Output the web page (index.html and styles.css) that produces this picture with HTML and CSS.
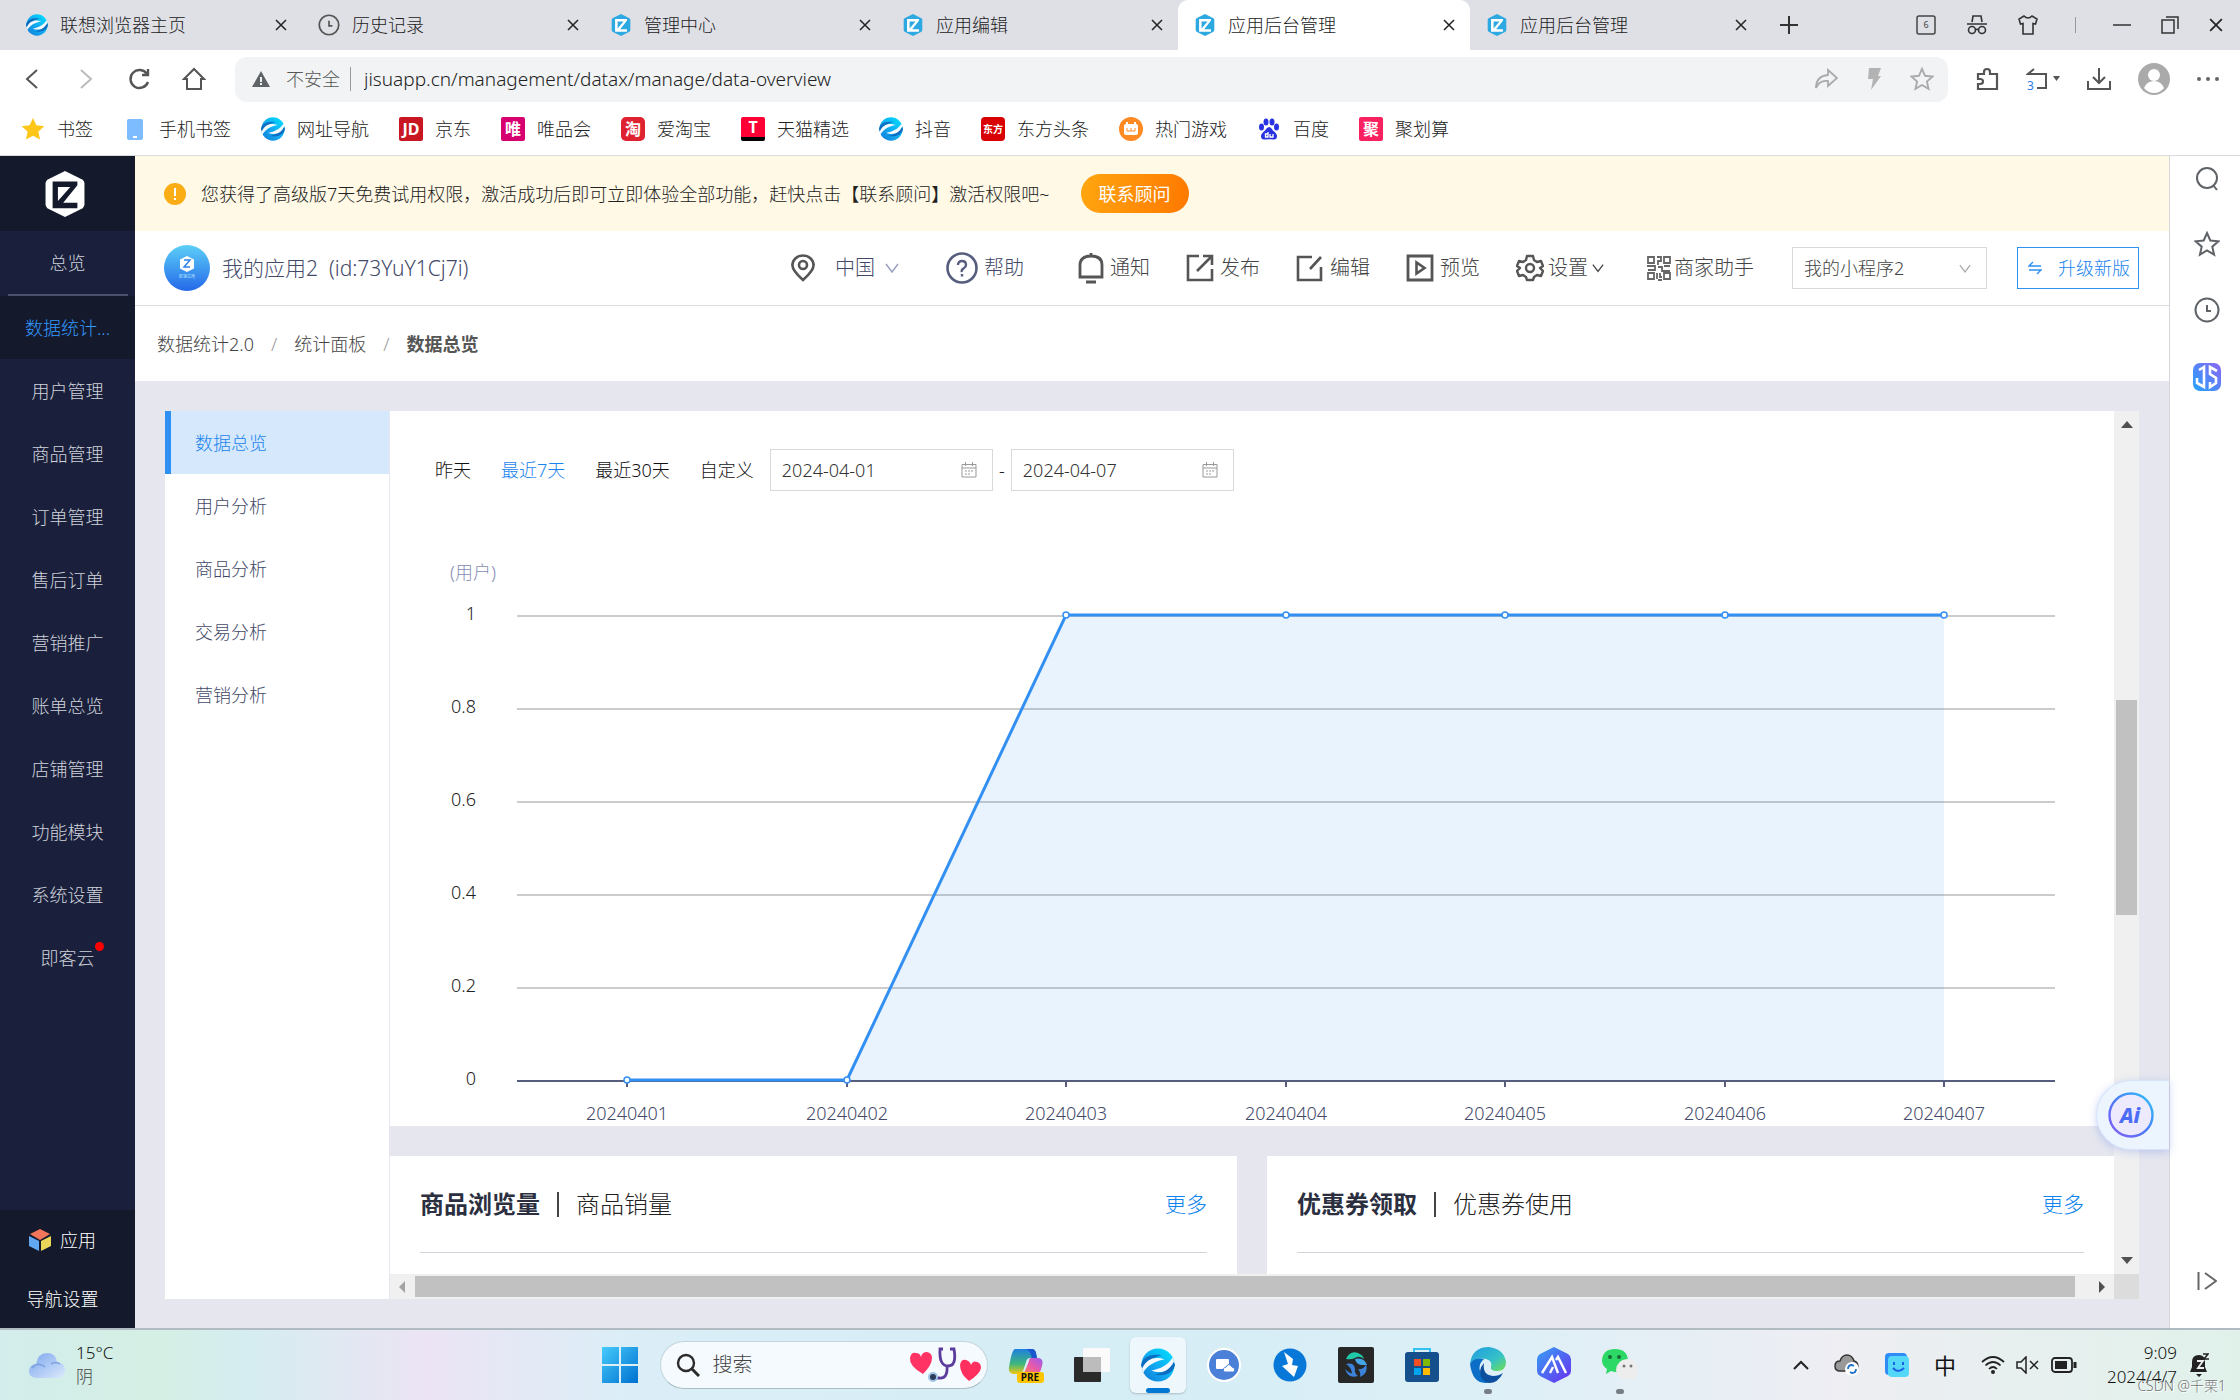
FILE: index.html
```
<!DOCTYPE html>
<html lang="zh-CN">
<head>
    <meta charset="UTF-8">
    <meta name="viewport" content="width=device-width, initial-scale=1.0">
    <title>应用后台管理</title>
    <link rel="stylesheet" href="styles.css">
</head>
<body>
<!-- Shared icons -->
<svg class="sprite" width="0" height="0" aria-hidden="true">
    <defs>
        <linearGradient id="eBase" x1="0" y1="1" x2="1" y2="0"><stop offset="0" stop-color="#1478d4"/><stop offset=".45" stop-color="#10a8f0"/><stop offset="1" stop-color="#00e5ff"/></linearGradient>
        <linearGradient id="avatarBg" x1="0" y1="0" x2="0" y2="1"><stop offset="0" stop-color="#5ccff8"/><stop offset="1" stop-color="#2468e8"/></linearGradient>
        <linearGradient id="winBg" x1="0" y1="0" x2="1" y2="1"><stop offset="0" stop-color="#45cbfb"/><stop offset="1" stop-color="#0070d0"/></linearGradient>
        <linearGradient id="aiRing" x1="0" y1="1" x2="1" y2="0"><stop offset="0" stop-color="#8a5cf6"/><stop offset=".5" stop-color="#4b7bf5"/><stop offset="1" stop-color="#2fc6fa"/></linearGradient>
        <linearGradient id="jsBg" x1="0" y1="1" x2="1" y2="0"><stop offset="0" stop-color="#23a4ff"/><stop offset="1" stop-color="#8a66f2"/></linearGradient>
        <linearGradient id="cloudBg" x1="0" y1="0" x2="1" y2="1"><stop offset="0" stop-color="#7ba5ee"/><stop offset="1" stop-color="#dceafc"/></linearGradient>
        <linearGradient id="copA" x1="0" y1="0" x2="0" y2="1"><stop offset="0" stop-color="#1f7fe0"/><stop offset=".6" stop-color="#3fb87c"/><stop offset="1" stop-color="#f2c811"/></linearGradient>
        <linearGradient id="copB" x1="1" y1="0" x2="0" y2="1"><stop offset="0" stop-color="#9a5cf0"/><stop offset=".5" stop-color="#e85aa8"/><stop offset="1" stop-color="#ff8a4c"/></linearGradient>
        <linearGradient id="edgeA" x1="0" y1="0" x2="1" y2="1"><stop offset="0" stop-color="#1f9be0"/><stop offset=".6" stop-color="#35c1c8"/><stop offset="1" stop-color="#6fe04c"/></linearGradient>
        <linearGradient id="hexBg" x1="0" y1="0" x2="1" y2="1"><stop offset="0" stop-color="#35a0f5"/><stop offset="1" stop-color="#6a2ff0"/></linearGradient>
    </defs>
    <symbol id="icon-e" viewBox="0 0 33 33">
        <circle cx="16.500" cy="16.500" r="16" fill="url(#eBase)"/>
        <path d="M0 17C1 10 8 5 20 7 12 9 6 12 3 20q-2 0-3-3z" fill="#0b6cc0"/>
        <path d="M33 16c-1 7-8 12-20 10 8-2 14-5 17-13q2 0 3 3z" fill="#0b6cc0"/>
        <path d="M1 20C6 10 13 8 23 11 14 13 7 16 2 24z" fill="#f4f9fd"/>
        <path d="M32 13C27 23 20 25 10 22 19 20 26 17 31 9z" fill="#f4f9fd"/>
    </symbol>
    <symbol id="icon-hex" viewBox="0 0 24 26">
        <path d="M12 0l10 5q1 1 1 2v12q0 1-1 2l-10 5-10-5q-1-1-1-2V7q0-1 1-2z" fill="currentColor"/>
        <path class="hex-cut" d="M5 6h14v2l-8 10h8v3H5zM8 9v8l7-8z"/>
    </symbol>
    <symbol id="icon-x" viewBox="0 0 12 12"><path d="M1 1l10 10M11 1L1 11" fill="none" stroke="currentColor" stroke-width="1.500"/></symbol>
    <symbol id="icon-clock" viewBox="0 0 26 26"><circle cx="13" cy="13" r="11.500" fill="none" stroke="currentColor" stroke-width="2"/><path d="M13 8v6h4" fill="none" stroke="currentColor" stroke-width="2"/></symbol>
    <symbol id="icon-star" viewBox="0 0 26 26"><path d="M13 2l3.300 7.500 8.200.8-6.200 5.400 1.800 8L13 19.500 5.900 23.700l1.800-8L1.500 10.300l8.200-.8z" fill="none" stroke="currentColor" stroke-width="2"/></symbol>
    <symbol id="icon-down" viewBox="0 0 14 10"><path d="M1 1l6 8 6-8" fill="none" stroke="currentColor" stroke-width="1.500"/></symbol>
    <symbol id="icon-calendar" viewBox="0 0 16 16"><path d="M1 2.500h14v12.500H1zM1 6h14M4.500 0v4M11.500 0v4" fill="none" stroke="currentColor"/><path d="M4 9h2m1 0h2m1 0h2M4 12h2m1 0h2" stroke="currentColor"/></symbol>
</svg>

<header class="browser">
    <div class="tabs">
        <div class="tab"><svg class="fav"><use href="#icon-e"/></svg><span>联想浏览器主页</span><button class="tab-close" aria-label="关闭"><svg><use href="#icon-x"/></svg></button></div>
        <div class="tab"><svg class="fav gray"><use href="#icon-clock"/></svg><span>历史记录</span><button class="tab-close" aria-label="关闭"><svg><use href="#icon-x"/></svg></button></div>
        <div class="tab"><svg class="fav sky"><use href="#icon-hex"/></svg><span>管理中心</span><button class="tab-close" aria-label="关闭"><svg><use href="#icon-x"/></svg></button></div>
        <div class="tab"><svg class="fav sky"><use href="#icon-hex"/></svg><span>应用编辑</span><button class="tab-close" aria-label="关闭"><svg><use href="#icon-x"/></svg></button></div>
        <div class="tab active"><svg class="fav sky"><use href="#icon-hex"/></svg><span>应用后台管理</span><button class="tab-close" aria-label="关闭"><svg><use href="#icon-x"/></svg></button></div>
        <div class="tab"><svg class="fav sky"><use href="#icon-hex"/></svg><span>应用后台管理</span><button class="tab-close" aria-label="关闭"><svg><use href="#icon-x"/></svg></button></div>
        <button class="new-tab" aria-label="新标签页"><svg width="18" height="18" viewBox="0 0 18 18"><path d="M9 0v18M0 9h18" stroke="#333" stroke-width="2"/></svg></button>
        <div class="window-tools">
            <button aria-label="标签列表"><svg width="20" height="20" viewBox="0 0 20 20"><rect x="1" y="1" width="18" height="18" rx="2" fill="none" stroke="#444" stroke-width="1.500"/><text x="10" y="13" font-size="9" font-weight="400" text-anchor="middle" fill="#444">6</text></svg></button>
            <button aria-label="无痕"><svg width="22" height="20" viewBox="0 0 22 20"><path d="M6 7l1-6h8l1 6M1 9h20M9 15q2-1.500 4 0" fill="none" stroke="#333" stroke-width="1.600"/><circle cx="6" cy="15" r="3.500" fill="none" stroke="#333" stroke-width="1.600"/><circle cx="16" cy="15" r="3.500" fill="none" stroke="#333" stroke-width="1.600"/></svg></button>
            <button aria-label="皮肤"><svg width="20" height="20" viewBox="0 0 20 20"><path d="M6 1L1 4l1.500 5L5 8.500V19h10V8.500l2.500.5L19 4l-5-3q-4 4-8 0z" fill="none" stroke="#333" stroke-width="1.600"/></svg></button>
            <i class="bar"></i>
            <button aria-label="最小化"><svg width="18" height="18" viewBox="0 0 18 18"><path d="M0 9h18" stroke="#333" stroke-width="1.500"/></svg></button>
            <button aria-label="还原"><svg width="18" height="18" viewBox="0 0 18 18"><path d="M1 4h12v13H1zM5 1h12v12" fill="none" stroke="#333" stroke-width="1.500"/></svg></button>
            <button aria-label="关闭窗口"><svg width="14" height="14"><use href="#icon-x"/></svg></button>
        </div>
    </div>
    <div class="address-row">
        <div class="nav-buttons">
            <button aria-label="后退"><svg width="24" height="24" viewBox="0 0 24 24"><path d="M17 3L7 12l10 9" fill="none" stroke="#555" stroke-width="2"/></svg></button>
            <button aria-label="前进"><svg width="24" height="24" viewBox="0 0 24 24"><path d="M7 3l10 9-10 9" fill="none" stroke="#bbb" stroke-width="2"/></svg></button>
            <button aria-label="刷新"><svg width="24" height="24" viewBox="0 0 24 24"><path d="M20 15a9 9 0 1 1-1-8M20 2v6h-6" fill="none" stroke="#555" stroke-width="2.400"/></svg></button>
            <button aria-label="主页"><svg width="24" height="24" viewBox="0 0 24 24"><path d="M2 12L12 2l10 10h-3v10H5V12z" fill="none" stroke="#555" stroke-width="2"/></svg></button>
        </div>
        <div class="address">
            <svg width="18" height="18" viewBox="0 0 18 18"><path d="M9 1l9 16H0z" fill="#5f6368"/><path d="M9 7v5M9 13v2" stroke="#fff" stroke-width="1.800"/></svg>
            <span class="unsafe">不安全</span>
            <input type="text" aria-label="地址" value="jisuapp.cn/management/datax/manage/data-overview">
            <svg width="24" height="24" viewBox="0 0 24 24"><path d="M14 3l9 8-9 8v-5q-9-1-12 7 0-12 12-13z" fill="none" stroke="#aaa" stroke-width="1.800"/></svg>
            <svg width="24" height="24" viewBox="0 0 24 24"><path d="M7 1h12l-3 8h3L9 23l2-11H6z" fill="#b3b3b3"/></svg>
            <svg width="24" height="24" class="light"><use href="#icon-star"/></svg>
        </div>
        <div class="address-tools">
            <button aria-label="扩展"><svg width="24" height="24" viewBox="0 0 24 24"><path d="M2 7h6V5q0-3 3-3t3 3v2h7v15H2v-5h2q3 0 3-2.500T4 12H2z" fill="none" stroke="#555" stroke-width="2.200"/></svg></button>
            <button aria-label="撤销"><svg width="34" height="32" viewBox="0 0 34 32"><path d="M8 6l-6 5h18v14H11" fill="none" stroke="#555" stroke-width="2"/><path d="M27 13h7l-3.500 5z" fill="#555"/><text x="1" y="27" font-size="12" font-weight="400" fill="#2e7be6">3</text></svg></button>
            <button aria-label="下载"><svg width="26" height="26" viewBox="0 0 26 26"><path d="M13 2v14M7 11l6 6 6-6M2 15v8h22v-8" fill="none" stroke="#555" stroke-width="2"/></svg></button>
            <button aria-label="账户"><svg width="32" height="32" viewBox="0 0 32 32"><circle cx="16" cy="16" r="16" fill="#aaa"/><circle cx="16" cy="12" r="6" fill="#fff"/><path d="M6 25q3-7 10-7t10 7q-4 5-10 5t-10-5z" fill="#fff"/></svg></button>
            <button aria-label="更多"><svg width="24" height="6" viewBox="0 0 24 6"><circle cx="3" cy="3" r="2" fill="#666"/><circle cx="12" cy="3" r="2" fill="#666"/><circle cx="21" cy="3" r="2" fill="#666"/></svg></button>
        </div>
    </div>
    <nav class="bookmarks">
        <a href="#"><svg viewBox="0 0 24 24"><path d="M12 1l3.400 7.200 8 1-6 5.400 1.600 8L12 18.700l-7 3.900 1.600-8-6-5.400 8-1z" fill="#ffc61a"/></svg>书签</a>
        <a href="#"><svg viewBox="0 0 24 24"><rect x="4" y="2" width="16" height="21" rx="2" fill="#7cbcff"/><path d="M10 20h4" stroke="#fff" stroke-width="2"/></svg>手机书签</a>
        <a href="#"><svg><use href="#icon-e"/></svg>网址导航</a>
        <a href="#"><b class="site-icon jd">JD</b>京东</a>
        <a href="#"><b class="site-icon wei">唯</b>唯品会</a>
        <a href="#"><b class="site-icon tao">淘</b>爱淘宝</a>
        <a href="#"><b class="site-icon tmall">T</b>天猫精选</a>
        <a href="#"><svg><use href="#icon-e"/></svg>抖音</a>
        <a href="#"><b class="site-icon dong">东方</b>东方头条</a>
        <a href="#"><svg viewBox="0 0 24 24"><circle cx="12" cy="12" r="12" fill="#ff8a24"/><rect x="5" y="7" width="14" height="11" rx="2" fill="#fff"/><path d="M8 5v3M16 5v3" stroke="#fff" stroke-width="2"/><path d="M8 14v-3M12 14v-3M16 14v-3M8 14h8" stroke="#ff8a24"/></svg>热门游戏</a>
        <a href="#"><svg viewBox="0 0 24 24"><g fill="#2932e1"><ellipse cx="4.500" cy="10" rx="2.500" ry="3.500"/><ellipse cx="9" cy="5" rx="2.500" ry="3.500"/><ellipse cx="15" cy="5" rx="2.500" ry="3.500"/><ellipse cx="19.500" cy="10" rx="2.500" ry="3.500"/><path d="M12 10q2 0 4 3.500 4 3 4 5.500 0 4-4 3.500-4-.7-8 0-4 .5-4-3.500 0-2.500 4-5.500 2-3.500 4-3.500z"/></g><path d="M11 15v5H8.500v-3H11M13 17v3h3v-3" fill="none" stroke="#fff" stroke-width="1.300"/></svg>百度</a>
        <a href="#"><b class="site-icon ju">聚</b>聚划算</a>
    </nav>
</header>

<div class="workspace">
    <aside class="sidebar">
        <a class="brand" href="#" aria-label="首页"><svg><use href="#icon-hex"/></svg></a>
        <a class="overview" href="#">总览</a>
        <hr>
        <a class="current" href="#">数据统计...</a>
        <a href="#">用户管理</a>
        <a href="#">商品管理</a>
        <a href="#">订单管理</a>
        <a href="#">售后订单</a>
        <a href="#">营销推广</a>
        <a href="#">账单总览</a>
        <a href="#">店铺管理</a>
        <a href="#">功能模块</a>
        <a href="#">系统设置</a>
        <a href="#"><span class="dotted">即客云</span></a>
        <div class="sidebar-foot">
            <a href="#"><svg width="22" height="22" viewBox="0 0 22 22"><path d="M11 0l10 5-10 6L1 5z" fill="#f2775a"/><path d="M0 7l10 5v10L0 17z" fill="#62a8f0"/><path d="M22 7l-10 5v10l10-5z" fill="#ecd65a"/></svg>应用</a>
            <a class="nav-set" href="#">导航设置</a>
        </div>
    </aside>

    <main>
        <div class="notice">
            <svg width="22" height="22" viewBox="0 0 22 22"><circle cx="11" cy="11" r="11" fill="#faad14"/><path d="M11 5v8M11 15v2" stroke="#fff" stroke-width="2"/></svg>
            <span>您获得了高级版7天免费试用权限，激活成功后即可立即体验全部功能，赶快点击【联系顾问】激活权限吧~</span>
            <button>联系顾问</button>
        </div>
        <div class="app-header">
            <svg width="46" height="46" viewBox="0 0 46 46"><circle cx="23" cy="23" r="23" fill="url(#avatarBg)"/><path d="M23 11l7 3.500v9L23 27l-7-3.500v-9z" fill="#fff"/><path d="M20 15h6l-6 7h6" fill="none" stroke="#2f83ea" stroke-width="1.500"/><text x="23" y="33" font-size="4" text-anchor="middle" fill="#dff">即速应用</text></svg>
            <h1>我的应用2&nbsp; (id:73YuY1Cj7i)</h1>
            <nav class="app-nav">
                <a class="area" href="#"><svg width="24" height="28" viewBox="0 0 24 28"><path d="M12 26Q1 16 1.500 11a10.500 9.500 0 0 1 21 0q.5 5-10.500 15z" fill="none" stroke="#555" stroke-width="2.600"/><circle cx="12" cy="11" r="4" fill="none" stroke="#555" stroke-width="2.600"/></svg><span>中国</span><svg class="caret" width="14" height="10"><use href="#icon-down"/></svg></a>
                <a class="help" href="#"><svg width="32" height="32" viewBox="0 0 32 32"><circle cx="16" cy="16" r="14.500" fill="none" stroke="#575d7d" stroke-width="2.600"/><path d="M12 13q0-4 4-4t4 4q0 2-2.500 3.500T16 20M16 22v2.500" fill="none" stroke="#575d7d" stroke-width="2.400"/></svg>帮助</a>
                <a href="#"><svg width="26" height="32" viewBox="0 0 26 32"><path d="M2 25V13Q2 4 13 4t11 9v12zM13 1v3M8 30h10" fill="none" stroke="#555" stroke-width="2.800"/></svg>通知</a>
                <a href="#"><svg width="28" height="28" viewBox="0 0 28 28"><path d="M13 2H2v24h24V15M17 2h9v9M26 2L11 17" fill="none" stroke="#555" stroke-width="2.600"/></svg>发布</a>
                <a href="#"><svg width="28" height="28" viewBox="0 0 28 28"><path d="M16 3H2v23h23V13M25 3L14 15" fill="none" stroke="#555" stroke-width="2.600"/></svg>编辑</a>
                <a href="#"><svg width="28" height="28" viewBox="0 0 28 28"><path d="M2 2h24v24H2z" fill="none" stroke="#555" stroke-width="2.800"/><path d="M10.500 8.500v11l8-5.500z" fill="none" stroke="#555" stroke-width="2.600"/></svg>预览</a>
                <a class="setting" href="#"><svg width="28" height="28" viewBox="0 0 28 28"><path d="M11 2h6l1 4 3 2 4-1 2 5-3 2v0l3 3-2 5-4-1-3 2-1 3h-6l-1-3-3-2-4 1-2-5 3-3-3-2 2-5 4 1 3-2z" fill="none" stroke="#555" stroke-width="2.400" stroke-linejoin="round"/><circle cx="14" cy="14" r="4" fill="none" stroke="#555" stroke-width="2.400"/></svg><span>设置</span><svg width="12" height="10"><use href="#icon-down"/></svg></a>
                <a class="helper" href="#"><svg width="26" height="26" viewBox="0 0 26 26"><path d="M2 2h6v6H2zM18 2h6v6h-6zM2 18h6v6H2zM18 18h6v6h-6zM11 2h4v4h-3v4M1 11h8v4H2M12 12h4v4h8M18 11h6M11 18v6M14 18v4h2M12 25h4" fill="none" stroke="#666" stroke-width="1.800"/></svg>商家助手</a>
            </nav>
            <div class="app-select">
                <select aria-label="小程序"><option>我的小程序2</option></select>
                <svg width="12" height="9"><use href="#icon-down"/></svg>
            </div>
            <button class="upgrade"><svg width="14" height="14" viewBox="0 0 14 14"><path d="M5 1L1 5h12M1 9h12l-4 4" fill="none" stroke="#2e90f0" stroke-width="1.400"/></svg>升级新版</button>
        </div>
        <nav class="crumbs"><a href="#">数据统计2.0</a><i>/</i><a href="#">统计面板</a><i>/</i><b>数据总览</b></nav>

        <div class="board">
            <nav class="submenu">
                <a class="current" href="#">数据总览</a>
                <a href="#">用户分析</a>
                <a href="#">商品分析</a>
                <a href="#">交易分析</a>
                <a href="#">营销分析</a>
            </nav>
            <div class="view">
                <div class="view-body">
                    <section class="trend">
                        <div class="filters">
                            <button>昨天</button>
                            <button class="current">最近7天</button>
                            <button>最近30天</button>
                            <button>自定义</button>
                            <div class="date"><input type="text" aria-label="开始日期" value="2024-04-01"><svg width="16" height="16"><use href="#icon-calendar"/></svg></div>
                            <span class="dash">-</span>
                            <div class="date"><input type="text" aria-label="结束日期" value="2024-04-07"><svg width="16" height="16"><use href="#icon-calendar"/></svg></div>
                        </div>
                        <svg class="chart" viewBox="0 0 1724 635">
                            <g class="y-labels">
                                <text class="unit" x="60" y="88">(用户)</text>
                                <text x="86" y="129">1</text>
                                <text x="86" y="222">0.8</text>
                                <text x="86" y="315">0.6</text>
                                <text x="86" y="408">0.4</text>
                                <text x="86" y="501">0.2</text>
                                <text x="86" y="594">0</text>
                            </g>
                            <path class="grid" d="M127 125h1538M127 218h1538M127 311h1538M127 404h1538M127 497h1538"/>
                            <path class="area-fill" d="M237 589h220L676 124h878v465z"/>
                            <path class="axis" d="M127 590h1538M237 590v6M457 590v6M676 590v6M896 590v6M1115 590v6M1335 590v6M1554 590v6"/>
                            <path class="line" d="M237 589h220L676 124h878"/>
                            <g class="points">
                                <circle cx="237" cy="589" r="3"/><circle cx="457" cy="589" r="3"/><circle cx="676" cy="124" r="3"/><circle cx="896" cy="124" r="3"/><circle cx="1115" cy="124" r="3"/><circle cx="1335" cy="124" r="3"/><circle cx="1554" cy="124" r="3"/>
                            </g>
                            <g class="x-labels">
                                <text x="237" y="629">20240401</text>
                                <text x="457" y="629">20240402</text>
                                <text x="676" y="629">20240403</text>
                                <text x="896" y="629">20240404</text>
                                <text x="1115" y="629">20240405</text>
                                <text x="1335" y="629">20240406</text>
                                <text x="1554" y="629">20240407</text>
                            </g>
                        </svg>
                    </section>
                    <div class="cards">
                        <section class="card"><div class="card-head"><h2>商品浏览量</h2><i></i><span>商品销量</span><a href="#">更多</a></div></section>
                        <section class="card"><div class="card-head"><h2>优惠券领取</h2><i></i><span>优惠券使用</span><a href="#">更多</a></div></section>
                    </div>
                </div>
                <div class="scroll-y">
                    <svg width="12" height="8" viewBox="0 0 12 8"><path d="M0 8h12L6 1z" fill="#505050"/></svg>
                    <div class="thumb"></div>
                    <svg width="12" height="8" viewBox="0 0 12 8"><path d="M0 0h12L6 7z" fill="#505050"/></svg>
                </div>
                <div class="scroll-x">
                    <svg width="8" height="12" viewBox="0 0 8 12"><path d="M7 0v12L1 6z" fill="#a3a3a3"/></svg>
                    <div class="thumb"></div>
                    <svg width="8" height="12" viewBox="0 0 8 12"><path d="M1 0v12l6-6z" fill="#505050"/></svg>
                </div>
                <div class="corner"></div>
            </div>
        </div>
        <button class="ai-float" aria-label="AI 助手"><svg width="46" height="46" viewBox="0 0 46 46"><circle cx="23" cy="23" r="21.500" fill="#eceafc" stroke="url(#aiRing)" stroke-width="2.400"/><text x="22" y="31" font-size="21" font-weight="800" font-style="italic" text-anchor="middle" fill="#4b6cf5">Ai</text></svg></button>
    </main>

    <aside class="side-tools">
        <button aria-label="搜索"><svg width="24" height="24" viewBox="0 0 24 24"><circle cx="12" cy="11" r="10" fill="none" stroke="#5f6368" stroke-width="2"/><path d="M18 18l4 5" stroke="#5f6368" stroke-width="2"/></svg></button>
        <button aria-label="收藏"><svg width="26" height="26"><use href="#icon-star"/></svg></button>
        <button aria-label="历史"><svg width="26" height="26"><use href="#icon-clock"/></svg></button>
        <button aria-label="JS"><svg width="28" height="28" viewBox="0 0 28 28"><rect width="28" height="28" rx="7" fill="url(#jsBg)"/><path d="M6 7l5-3v20l-7-4v-5M24 8l-7-4v7l6 4v5l-6 4v-5" fill="none" stroke="#fff" stroke-width="2.600"/></svg></button>
        <button class="collapse" aria-label="收起"><svg width="20" height="18" viewBox="0 0 20 18"><path d="M1.500 0v18M8 1l11 8-11 8" fill="none" stroke="#666" stroke-width="2"/></svg></button>
    </aside>
</div>

<footer class="taskbar">
    <div class="weather">
        <svg width="36" height="30" viewBox="0 0 36 30"><path d="M7 28q-7-1-7-7t7-7Q9 3 18 3t10 9q8 1 8 8t-7 8z" fill="url(#cloudBg)"/><path d="M3 18q6-7 13-1M22 14q5-3 9 0" stroke="#7b9fe0" fill="none" stroke-width="1.500"/></svg>
        <div>15°C<br><span>阴</span></div>
    </div>
    <div class="apps">
        <button class="start" aria-label="开始"><svg width="36" height="36" viewBox="0 0 36 36"><path d="M0 0h17v17H0zM19 0h17v17H19zM0 19h17v17H0zM19 19h17v17H19z" fill="url(#winBg)"/></svg></button>
        <div class="search">
            <svg width="24" height="24" viewBox="0 0 24 24"><circle cx="10" cy="10" r="8" fill="none" stroke="#2b2b2b" stroke-width="2.400"/><path d="M16 16l7 7" stroke="#2b2b2b" stroke-width="3"/></svg>
            <input type="text" aria-label="搜索" placeholder="搜索">
            <svg width="72" height="36" viewBox="0 0 72 36"><path d="M14 27Q0 19 1 11q1-6 6-5 4 0 5 4 1-5 6-5 5 1 5 6 0 7-9 16z" fill="#ff3464"/><path d="M60 34Q51 27 51 18q1-6 6-5 4 1 5 5 2-5 6-3 4 1 4 6-1 6-12 13z" fill="#ff2f60"/><path d="M34 2h-3q-1 17 8 17T45 2h-4M38 19q1 13-8 12h-5" fill="none" stroke="#5b3b9c" stroke-width="2.800"/><circle cx="24" cy="30" r="4" fill="#2d3a5a" stroke="#9fc4e8" stroke-width="2"/></svg>
        </div>
        <button aria-label="Copilot"><svg width="36" height="36" viewBox="0 0 36 36"><path d="M7 2h17q3 0 4 4l1 5h-7q-3 0-4 4l-3 9q-1 3-4 3H5q-5-1-4-7Q4 2 7 2z" fill="url(#copA)"/><path d="M18 2h6q3 0 4 4l1 5h-5q-2-8-6-9z" fill="#1b56cf"/><path d="M23 11h8q5 1 3 8-2 8-5 8H13q3 0 4-3l4-10q0-3 2-3z" fill="url(#copB)"/><rect x="9" y="25" width="27" height="11" rx="3" fill="#ffc400"/><text x="22" y="34" font-size="10" font-weight="700" text-anchor="middle" fill="#111">PRE</text></svg></button>
        <button aria-label="任务视图"><svg width="36" height="36" viewBox="0 0 36 36"><rect y="10" width="27" height="25" rx="1" fill="#2a2a2a"/><rect x="9" y="1" width="27" height="24" rx="1" fill="#fafafa"/><path d="M9 10h18v15H9z" fill="#bcbcbc"/></svg></button>
        <button class="running" aria-label="联想浏览器"><svg width="34" height="34"><use href="#icon-e"/></svg></button>
        <button aria-label="云盘"><svg width="34" height="34" viewBox="0 0 34 34"><circle cx="17" cy="17" r="16" fill="#4a80d8" stroke="#fff" stroke-width="2"/><rect x="9" y="11" width="13" height="10" rx="1" fill="#fff"/><path d="M17 24q-2-4 2-5 3-5 6 0 4 1 2 5z" fill="#fff" stroke="#4a80d8"/></svg></button>
        <button aria-label="闪电"><svg width="34" height="34" viewBox="0 0 34 34"><circle cx="17" cy="17" r="16.500" fill="#0878d8"/><path d="M11 4l9 7-1 6 6 1-4 11L9 18l6-2z" fill="#fff"/></svg></button>
        <button aria-label="浪花"><svg width="36" height="36" viewBox="0 0 36 36"><rect width="36" height="36" rx="2" fill="#272727"/><path d="M8 12Q12 3 20 6q5 2 6 6-5-4-9-1-4 2-9 1z" fill="#1fcaa8"/><path d="M17 12q9-2 12 6-5 0-6 0-5-1-6-6z" fill="#44a6e6"/><path d="M28 17q3 9-6 13 1-5-2-8 6 1 8-5zM8 17q8-2 9 5-1 4 3 7-10 3-13-7 5 5 7 4-1-6-6-9z" fill="#3b82d8"/></svg></button>
        <button aria-label="商店"><svg width="36" height="36" viewBox="0 0 36 36"><path d="M10 6V2h16v4" fill="none" stroke="#35c1f1" stroke-width="2"/><rect x="1" y="5" width="34" height="30" rx="3" fill="#15508c"/><path fill="#f25022" d="M10 12h7v7h-7z"/><path fill="#7fba00" d="M19 12h7v7h-7z"/><path fill="#00a4ef" d="M10 21h7v7h-7z"/><path fill="#ffb900" d="M19 21h7v7h-7z"/></svg></button>
        <button class="opened" aria-label="Edge"><svg width="36" height="36" viewBox="0 0 36 36"><path d="M0 17Q2 0 19 0q15 2 17 15 0 9-9 9-7 0-6-4 2-6-5-8Q5 10 0 17z" fill="url(#edgeA)"/><path d="M0 17q4-7 14-5-6 5-4 12 2 8 11 11Q3 40 0 17z" fill="#0b6fc8"/><path d="M14 16q-2 12 9 13 6 0 10-3-5 10-14 10-9-2-9-12 1-5 4-8z" fill="#0d4f9f"/></svg></button>
        <button aria-label="AI"><svg width="36" height="36" viewBox="0 0 36 36"><path d="M18 0l14 7q3 2 3 5v12q0 3-3 5l-14 7-14-7q-3-2-3-5V12q0-3 3-5z" fill="url(#hexBg)"/><path d="M6 26l10-16 6 16M14 26l3-6M20 13l2-3 8 16" fill="none" stroke="#fff" stroke-width="2.400"/></svg></button>
        <button class="opened" aria-label="微信"><svg width="36" height="34" viewBox="0 0 36 34"><path d="M13 1q12 0 13 11 0 12-13 12l-4-1-5 3 1-5Q0 18 0 12 1 1 13 1z" fill="#2cd866"/><circle cx="8" cy="9" r="2" fill="#186b34"/><circle cx="17" cy="9" r="2" fill="#186b34"/><path d="M25 11q10 1 11 10 0 5-3 8v4l-5-2q-13 1-14-9 1-10 11-11z" fill="#ededed"/><circle cx="22" cy="18" r="1.500" fill="#777"/><circle cx="29" cy="18" r="1.500" fill="#777"/></svg></button>
    </div>
    <div class="tray">
        <svg width="16" height="10" viewBox="0 0 16 10"><path d="M1 9l7-7 7 7" fill="none" stroke="#222" stroke-width="2"/></svg>
        <svg width="26" height="22" viewBox="0 0 26 22"><path d="M6 17q-5 0-5-5t5-5q2-6 7-6t7 6q4 1 4 6t-5 4z" fill="#999" stroke="#333" stroke-width="1.500"/><circle cx="18" cy="15" r="7" fill="#fff"/><path d="M14 15q0-4 4-4l2 1M22 15q0 4-4 4l-2-1" fill="none" stroke="#2270c8" stroke-width="1.800"/></svg>
        <svg width="24" height="24" viewBox="0 0 24 24"><rect width="22" height="22" rx="4" fill="#2f8bf5"/><rect x="3" y="3" width="21" height="21" rx="4" fill="#55d8f8"/><path d="M9 9v3M18 9v3M8 15q5 6 11 0" fill="none" stroke="#1b62e8" stroke-width="2"/></svg>
        <span class="ime">中</span>
        <div class="status">
            <svg width="24" height="18" viewBox="0 0 24 18"><path d="M1 6q11-10 22 0M4.500 9.500q7.500-7 15 0M8 13q4-4 8 0" fill="none" stroke="#222" stroke-width="1.700"/><circle cx="12" cy="16" r="2" fill="#222"/></svg>
            <svg width="24" height="18" viewBox="0 0 24 18"><path d="M1 6h4l5-5v16l-5-5H1zM14 5l8 8M22 5l-8 8" fill="none" stroke="#222" stroke-width="1.500"/></svg>
            <svg width="26" height="16" viewBox="0 0 26 16"><rect x="1" y="1" width="20" height="14" rx="3" fill="none" stroke="#222" stroke-width="1.800"/><rect x="4" y="4" width="12" height="8" fill="#222"/><path d="M24 5v6" stroke="#222" stroke-width="3"/></svg>
        </div>
        <div class="time">9:09<br>2024/4/7</div>
        <svg class="bell" width="20" height="24" viewBox="0 0 20 24"><path d="M1 19l2-5V9q0-7 7-7 6 0 6 7v5l2 5zM7 21h6l-3 3z" fill="#222"/><path d="M8 8h6l-5 7h6" fill="none" stroke="#eee" stroke-width="1.800"/><path d="M14 1h5l-4 5h5" fill="none" stroke="#222" stroke-width="1.500"/></svg>
    </div>
    <span class="watermark">CSDN @千栗1</span>
</footer>
</body>
</html>
```
FILE: styles.css
```
* {
box-sizing: border-box;
}
body {
margin: 0;
height: 100vh;
display: flex;
flex-direction: column;
overflow: hidden;
font-family: "Noto Sans", "Noto Sans CJK SC", sans-serif;
font-size: 18px;
font-weight: 300;
line-height: 24px;
color: #222;
background: #fff;
}
a {
color: inherit;text-decoration: none;
}
b {
font-weight: 700;
}
button, input, select {
font: inherit;color: inherit;background: none;border: 0;padding: 0;margin: 0;outline: none;
}
button {
cursor: pointer;
}
svg {
display: block;flex: none;
}
i {
font-style: normal;
}
.sprite {
position: absolute;
}
/* Browser chrome */
.browser {
border-bottom: 1px solid #dadbe0;
}
.tabs {
display: flex;align-items: stretch;height: 50px;background: #dfe0e6;padding-left: 10px;
}
.tab {
display: flex;align-items: center;gap: 12px;width: 292px;padding: 0 15px 0 16px;
}
.tab span {
flex: 1;white-space: nowrap;
}
.tab.active {
background: #fff;border-radius: 10px 10px 0 0;
}
.fav {
width: 22px;height: 22px;
}
.gray {
color: #555;
}
.sky {
color: #2ea8e0;
}
.hex-cut {
fill: var(--cut, #fff);
}
.tab-close svg {
width: 12px;height: 12px;
}
.new-tab {
margin-left: 18px;
}
.window-tools {
display: flex;align-items: center;gap: 30px;margin-left: auto;padding-right: 17px;
}
.bar {
width: 1px;height: 16px;background: #999;margin: 0 7px;
}
.address-row {
display: flex;align-items: center;height: 56px;padding: 2px 20px 0;
}
.nav-buttons {
display: flex;gap: 30px;margin-right: 29px;
}
.address {
flex: 1;display: flex;align-items: center;gap: 24px;height: 45px;padding: 0 14px 0 17px;
background: #f1f3f4;border-radius: 12px;
}
.unsafe {
margin-left: -8px;padding-right: 10px;border-right: 1px solid #999;color: #555;
}
.address input {
flex: 1;margin-left: -11px;font-size: 19px;
}
.light {
color: #aaa;
}
.address-tools {
display: flex;align-items: center;gap: 26px;margin-left: 28px;
}
.bookmarks {
display: flex;align-items: center;gap: 30px;height: 49px;padding: 0 21px 4px;
}
.bookmarks a {
display: flex;align-items: center;gap: 12px;white-space: nowrap;
}
.bookmarks svg {
width: 24px;height: 24px;
}
.site-icon {
width: 24px;height: 24px;border-radius: 2px;color: #fff;text-align: center;font-size: 16px;white-space: nowrap;
}
.jd { background: #c91623; }
.wei { background: #d6006f; }
.tao { background: #df2230;border-radius: 5px; }
.tmall { background: #ff0036;border-bottom: 4px solid #000;line-height: 20px; }
.dong { background: #d80000;border-radius: 4px;font-size: 10px; }
.ju { background: #f9215f; }
/* Page */
.workspace {
flex: 1;min-height: 0;display: flex;
}
.sidebar {
width: 135px;display: flex;flex-direction: column;background: #1a203c;color: #d0d2da;
}
.sidebar a {
height: 63px;display: flex;align-items: center;justify-content: center;
}
.sidebar hr {
width: 120px;margin: 0 auto;border: 0;height: 2px;background: #4b506e;
}
.sidebar .current {
background: #141a2b;color: #3398ff;
}
.sidebar .brand {
--cut: #141a2b;
height: 75px;background: #141a2b;color: #fff;padding-right: 5px;
}
.brand svg {
width: 44px;height: 46px;
}
.dotted {
position: relative;
}
.dotted::after {
content: "";position: absolute;right: -9px;top: -4px;width: 9px;height: 9px;border-radius: 50%;background: #f00;
}
.sidebar-foot {
margin-top: auto;background: #141a2b;color: #fff;
}
.sidebar-foot a {
height: 59px;gap: 9px;padding-right: 10px;
}
main {
flex: 1;min-width: 0;position: relative;display: flex;flex-direction: column;background: #e5e6ee;
}
.notice {
display: flex;align-items: center;height: 75px;padding-left: 29px;background: #fff9e6;
}
.notice span {
margin: 0 31px 0 15px;
}
.notice button {
height: 39px;padding: 0 18px;border-radius: 20px;color: #fff;font-weight: 400;background: linear-gradient(100deg, #ffa60f, #ff7800);
}
.app-header {
display: flex;align-items: center;height: 75px;padding: 0 30px 0 29px;background: #fff;border-bottom: 1px solid #dcdde2;
font-size: 20px;color: #444;white-space: nowrap;
}
.app-header h1 {
margin: 0 0 0 12px;font-size: 21px;font-weight: inherit;color: #434969;
}
.app-nav {
display: flex;gap: 36px;margin-left: auto;
}
.app-nav a {
display: flex;align-items: center;gap: 6px;
}
.area {
color: #434969;padding-right: 11px;
}
.area span {
margin: 0 4px 0 14px;
}
.area .caret {
color: #9aa0bd;
}
.help {
color: #434969;padding-right: 18px;
}
.app-nav .setting {
gap: 4px;padding-right: 6px;
}
.app-nav .helper {
gap: 2px;
}
.app-select {
display: flex;align-items: center;width: 195px;height: 42px;margin: 0 30px 0 38px;padding-right: 15px;
border: 1px solid #d9d9d9;font-size: 18px;
}
.app-select select {
appearance: none;flex: 1;padding-left: 11px;
}
.app-select svg {
color: #aaa;
}
.upgrade {
display: flex;align-items: center;gap: 16px;height: 42px;padding: 0 8px 0 10px;border: 1px solid #2e90f0;color: #1a84ee;font-size: 18px;
}
.crumbs {
display: flex;align-items: center;gap: 17px;height: 75px;padding-left: 22px;background: #fff;color: #444;
}
.crumbs i {
color: #999;
}
.crumbs b {
color: #555;
}
.board {
flex: 1;min-height: 0;display: flex;margin: 30px 30px 29px;background: #fff;
}
.submenu {
width: 225px;border-right: 1px solid #e5e6ee;color: #434969;
}
.submenu a {
display: flex;align-items: center;height: 63px;padding-left: 30px;
}
.submenu .current {
padding-left: 24px;border-left: 6px solid #2e90f0;background: #d5e8fc;color: #1a84ee;
}
.view {
flex: 1;min-width: 0;display: grid;grid-template-columns: minmax(0, 1fr) 25px;grid-template-rows: minmax(0, 1fr) 25px;
}
.view-body {
overflow: hidden;background: #e5e6ee;
}
.trend {
background: #fff;padding-top: 38px;
}
.filters {
display: flex;align-items: center;padding-left: 45px;
}
.filters button {
margin-right: 30px;color: #111;
}
.filters button.current {
color: #1a84ee;
}
.filters button:nth-child(4) {
margin-right: 16px;
}
.date {
display: flex;align-items: center;width: 223px;height: 42px;padding: 0 15px 0 11px;border: 1px solid #d9d9d9;color: #333;
}
.date input {
flex: 1;min-width: 0;
}
.date svg {
color: #999;
}
.dash {
width: 18px;text-align: center;
}
.chart {
width: 100%;height: auto;font-size: 18px;
}
.y-labels {
text-anchor: end;fill: #222;
}
.y-labels .unit {
text-anchor: start;fill: #868db3;
}
.x-labels {
text-anchor: middle;fill: #434969;
}
.grid {
fill: none;stroke: #ccc;stroke-width: 2;
}
.axis {
fill: none;stroke: #575d7d;stroke-width: 2;
}
.area-fill {
fill: #2e90f0;fill-opacity: .11;
}
.line {
fill: none;stroke: #3390f2;stroke-width: 3;
}
.points {
fill: #fff;stroke: #3390f2;stroke-width: 1.5;
}
.cards {
display: grid;grid-template-columns: 1fr 1fr;gap: 30px;margin-top: 30px;
}
.card {
height: 400px;padding: 0 30px;background: #fff;
}
.card-head {
display: flex;align-items: center;height: 97px;border-bottom: 1px solid #d2d4dc;font-size: 24px;
}
.card-head h2 {
margin: 0;font-size: 24px;font-weight: 700;color: #2b2f40;
}
.card-head i {
width: 2px;height: 25px;margin: 0 17px;background: #444;
}
.card-head a {
margin-left: auto;font-size: 21px;color: #0f84ee;
}
.scroll-y {
display: flex;flex-direction: column;align-items: center;padding: 9px 0;background: #f0f0f0;
}
.scroll-y .thumb {
width: 21px;height: 215px;margin: 272px 0 auto;background: #c1c1c1;
}
.scroll-x {
display: flex;align-items: center;padding: 0 8px;background: #f0f0f0;
}
.scroll-x .thumb {
flex: 1;height: 21px;margin: 0 23px 0 9px;background: #c1c1c1;
}
.corner {
background: #dcdcdc;
}
.ai-float {
position: absolute;right: 0;bottom: 178px;width: 73px;height: 70px;padding-left: 11px;
border-radius: 35px 0 0 35px;border: 1px solid #d5e4fb;border-right: 0;background: #ecf4fe;box-shadow: 0 2px 8px rgba(90, 120, 230, .3);
}
.side-tools {
display: flex;flex-direction: column;align-items: center;gap: 40px;width: 71px;padding: 11px 0 38px 4px;border-left: 1px solid #d5d6dc;color: #5f6368;
}
.side-tools .collapse {
margin-top: auto;
}
/* Taskbar */
.taskbar {
position: relative;display: grid;grid-template-columns: 1fr auto 1fr;align-items: center;height: 72px;border-top: 2px solid #b0bcc2;color: #111;
background: linear-gradient(90deg, #d2edeb 0, #d5efe4 7%, #d5edf1 11%, #ece4f4 19%, #dbeef7 28%, #d5edf5 50%, #dceff7 66%, #eeeef3 82%, #e0f1ea 100%);
}
.weather {
display: flex;align-items: center;gap: 11px;padding-left: 29px;font-size: 17px;
}
.weather span {
color: #444;
}
.apps {
display: flex;align-items: center;padding-left: 9px;
}
.apps button {
position: relative;display: grid;place-items: center;width: 56px;height: 56px;margin-right: 10px;border-radius: 6px;
}
.apps .start {
width: 36px;margin-right: 22px;
}
.search {
display: flex;align-items: center;gap: 13px;width: 328px;height: 48px;margin-right: 10px;padding: 0 6px 0 15px;
border: 1px solid #c3d5dc;border-bottom-color: #a9bcc4;border-radius: 24px;background: #f4fafd;font-size: 20px;
}
.search input {
flex: 1;min-width: 0;
}
.search input::placeholder {
color: #444;opacity: 1;
}
.apps .running {
background: #eef7fc;box-shadow: 0 1px 2px rgba(0, 0, 0, .2);
}
.running::after, .opened::after {
content: "";position: absolute;bottom: 0;left: 16px;width: 24px;height: 5px;border-radius: 3px;background: #0078d4;
}
.opened::after {
bottom: -1px;left: 24px;width: 8px;background: #777f85;
}
.apps button:last-child {
margin-right: 0;
}
.tray {
display: flex;align-items: center;justify-content: flex-end;gap: 25px;padding-right: 31px;
}
.ime {
font-size: 22px;font-weight: 400;
}
.status {
display: flex;align-items: center;gap: 11px;margin-right: 5px;
}
.time {
text-align: right;margin-right: -13px;font-size: 17px;
}
.watermark {
position: absolute;right: 14px;bottom: 2px;font-size: 14px;color: #777;text-shadow: 1px 1px #fff;
}
```
